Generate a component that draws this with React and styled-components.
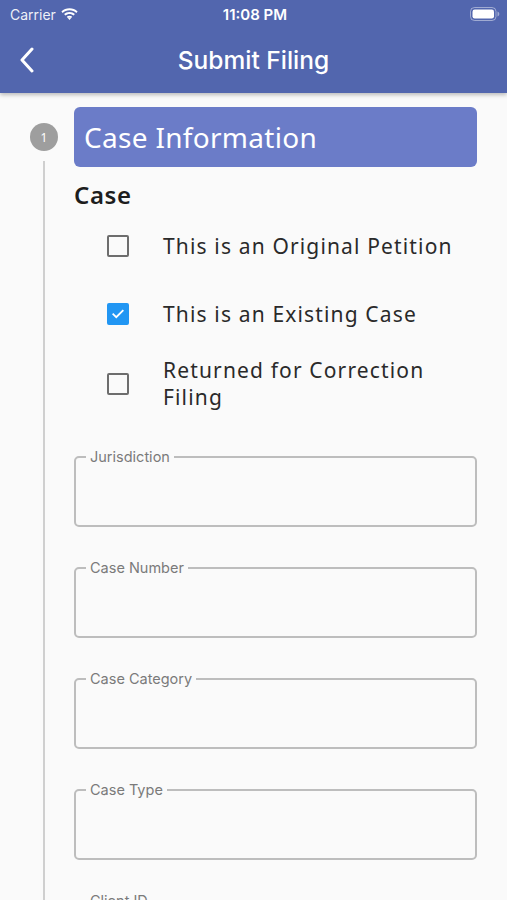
import React from 'react'
import styled, { createGlobalStyle } from 'styled-components'

const Global = createGlobalStyle`
  html, body { margin: 0; padding: 0; }
  body {
    background: #fafafa;
    font-family: "Noto Sans", "Open Sans", sans-serif;
    -webkit-font-smoothing: antialiased;
  }
`

const UI = {
  Screen: styled.div`
    width: 507px;
    height: 900px;
    overflow: hidden;
    background: #fafafa;
    display: flex;
    flex-direction: column;
  `,
  AppBar: styled.header`
    background: #5266ae;
    color: #fff;
    height: 93px;
    flex: none;
    box-shadow: 0 2px 4px rgba(0, 0, 0, 0.25);
    display: flex;
    flex-direction: column;
    position: relative;
    z-index: 1;
  `,
  StatusBar: styled.div`
    height: 28px;
    display: grid;
    grid-template-columns: 1fr auto 1fr;
    align-items: center;
    padding: 0 7px 0 10px;
    font-family: Inter, "Liberation Sans", sans-serif;
    font-size: 14px;
  `,
  Carrier: styled.div`
    display: flex;
    align-items: center;
    gap: 5px;
    color: rgba(255, 255, 255, 0.92);
  `,
  Clock: styled.div`
    font-weight: 600;
    font-size: 15px;
  `,
  Battery: styled.div`
    justify-self: end;
    display: flex;
    align-items: center;
  `,
  NavRow: styled.div`
    flex: 1;
    display: grid;
    grid-template-columns: 60px 1fr 60px;
    align-items: center;
    padding-bottom: 2px;
  `,
  Back: styled.div`
    display: flex;
    align-items: center;
    padding-left: 19px;
  `,
  Title: styled.h1`
    margin: 0;
    text-align: center;
    font-family: Inter, "Liberation Sans", sans-serif;
    font-size: 24.5px;
    font-weight: 500;
  `,
  Body: styled.div`
    flex: 1;
    display: grid;
    grid-template-columns: 74px 1fr;
    padding: 14px 30px 0 0;
  `,
  Rail: styled.div`
    display: flex;
    flex-direction: column;
    align-items: flex-start;
    padding: 16px 0 0 30px;
  `,
  StepDot: styled.div`
    width: 28px;
    height: 28px;
    border-radius: 50%;
    background: #9e9e9e;
    color: #fff;
    font-size: 12px;
    display: flex;
    align-items: center;
    justify-content: center;
    flex: none;
  `,
  RailLine: styled.div`
    width: 2px;
    flex: 1;
    margin: 10px 0 0 13px;
    background: #cfcfcf;
  `,
  Content: styled.div`
    display: flex;
    flex-direction: column;
  `,
  StepHeader: styled.div`
    height: 60px;
    border-radius: 6px;
    background: #6b7cc8;
    color: #fff;
    display: flex;
    align-items: center;
    padding-left: 10px;
    font-size: 28px;
    letter-spacing: 0.3px;
  `,
  Section: styled.div`
    margin-top: 13px;
    font-size: 24px;
    line-height: 30px;
    font-weight: 600;
    color: #1d1d1d;
    letter-spacing: 0.6px;
  `,
  Options: styled.div`
    display: flex;
    flex-direction: column;
    gap: 18px;
    margin-top: 11px;
    padding-left: 33px;
  `,
  Option: styled.label`
    display: flex;
    align-items: center;
    min-height: 50px;
    gap: 34px;
  `,
  Box: styled.span`
    width: 18px;
    height: 18px;
    flex: none;
    border-radius: 2px;
    border: 2px solid ${p => (p.$checked ? '#2196f3' : '#6d6d6d')};
    background: ${p => (p.$checked ? '#2196f3' : 'transparent')};
    display: flex;
    align-items: center;
    justify-content: center;
  `,
  OptionText: styled.span`
    font-size: 21px;
    line-height: 27px;
    color: #2a2a2a;
    letter-spacing: 1.15px;
  `,
  Fields: styled.div`
    display: flex;
    flex-direction: column;
    gap: 32px;
    margin-top: 37px;
  `,
  Field: styled.fieldset`
    margin: 0;
    height: 79px;
    box-sizing: border-box;
    border: 2px solid #bdbdbd;
    border-radius: 5px;
    padding: 0 12px;
  `,
  Legend: styled.legend`
    padding: 0 4px;
    margin-left: -2px;
    font-family: Inter, "Liberation Sans", sans-serif;
    font-size: 14.5px;
    color: #7a7a7a;
  `,
}

const Check = () => (
  <svg width="14" height="14" viewBox="0 0 24 24" fill="none" stroke="#fff" strokeWidth="3.2" strokeLinecap="square">
    <path d="M4 12.5l5 5L20 6.5" />
  </svg>
)

const Option = ({ checked, children }) => (
  <UI.Option>
    <UI.Box $checked={checked}>{checked && <Check />}</UI.Box>
    <UI.OptionText>{children}</UI.OptionText>
  </UI.Option>
)

const fields = ['Jurisdiction', 'Case Number', 'Case Category', 'Case Type', 'Client ID']

export default function App () {
  return (
    <UI.Screen>
      <Global />
      <UI.AppBar>
        <UI.StatusBar>
          <UI.Carrier>
            Carrier
            <svg width="17" height="13" viewBox="0 0 17 13" fill="#fff">
              <path d="M8.5 2.2c2.6 0 5 1 6.8 2.7l1.3-1.4C14.4 1.4 11.6.3 8.5.3S2.6 1.4.4 3.5l1.3 1.4C3.5 3.2 5.9 2.2 8.5 2.2z" />
              <path d="M8.5 5.9c1.6 0 3 .6 4.1 1.6l1.3-1.4C12.5 4.8 10.6 4 8.5 4S4.5 4.8 3.1 6.1l1.3 1.4c1.1-1 2.5-1.6 4.1-1.6z" />
              <path d="M8.5 9.6c.6 0 1.1.2 1.5.6L8.5 12 7 10.2c.4-.4.9-.6 1.5-.6z" />
              <path d="M8.5 7.7c1.1 0 2 .4 2.7 1.1l-1.2 1.4c-.4-.4-.9-.6-1.5-.6s-1.1.2-1.5.6L5.8 8.8c.7-.7 1.6-1.1 2.7-1.1z" />
            </svg>
          </UI.Carrier>
          <UI.Clock>11:08 PM</UI.Clock>
          <UI.Battery>
            <svg width="30" height="14" viewBox="0 0 30 14">
              <rect x="0.5" y="0.5" width="25.5" height="13" rx="4" fill="none" stroke="rgba(255,255,255,0.45)" />
              <rect x="2.5" y="2.5" width="21.5" height="9" rx="2.2" fill="#fff" />
              <path d="M27.5 4.5c1.2.4 1.8 1.3 1.8 2.5s-.6 2.1-1.8 2.5z" fill="rgba(255,255,255,0.45)" />
            </svg>
          </UI.Battery>
        </UI.StatusBar>
        <UI.NavRow>
          <UI.Back>
            <svg width="16" height="26" viewBox="0 0 16 26" fill="none" stroke="#fff" strokeWidth="3" strokeLinecap="round" strokeLinejoin="round">
              <path d="M13 2L3 13l10 11" />
            </svg>
          </UI.Back>
          <UI.Title>Submit Filing</UI.Title>
          <div />
        </UI.NavRow>
      </UI.AppBar>

      <UI.Body>
        <UI.Rail>
          <UI.StepDot>1</UI.StepDot>
          <UI.RailLine />
        </UI.Rail>
        <UI.Content>
          <UI.StepHeader>Case Information</UI.StepHeader>
          <UI.Section>Case</UI.Section>
          <UI.Options>
            <Option>This is an Original Petition</Option>
            <Option checked>This is an Existing Case</Option>
            <Option>Returned for Correction<br />Filing</Option>
          </UI.Options>
          <UI.Fields>
            {fields.map(f => (
              <UI.Field key={f}>
                <UI.Legend>{f}</UI.Legend>
              </UI.Field>
            ))}
          </UI.Fields>
        </UI.Content>
      </UI.Body>
    </UI.Screen>
  )
}
